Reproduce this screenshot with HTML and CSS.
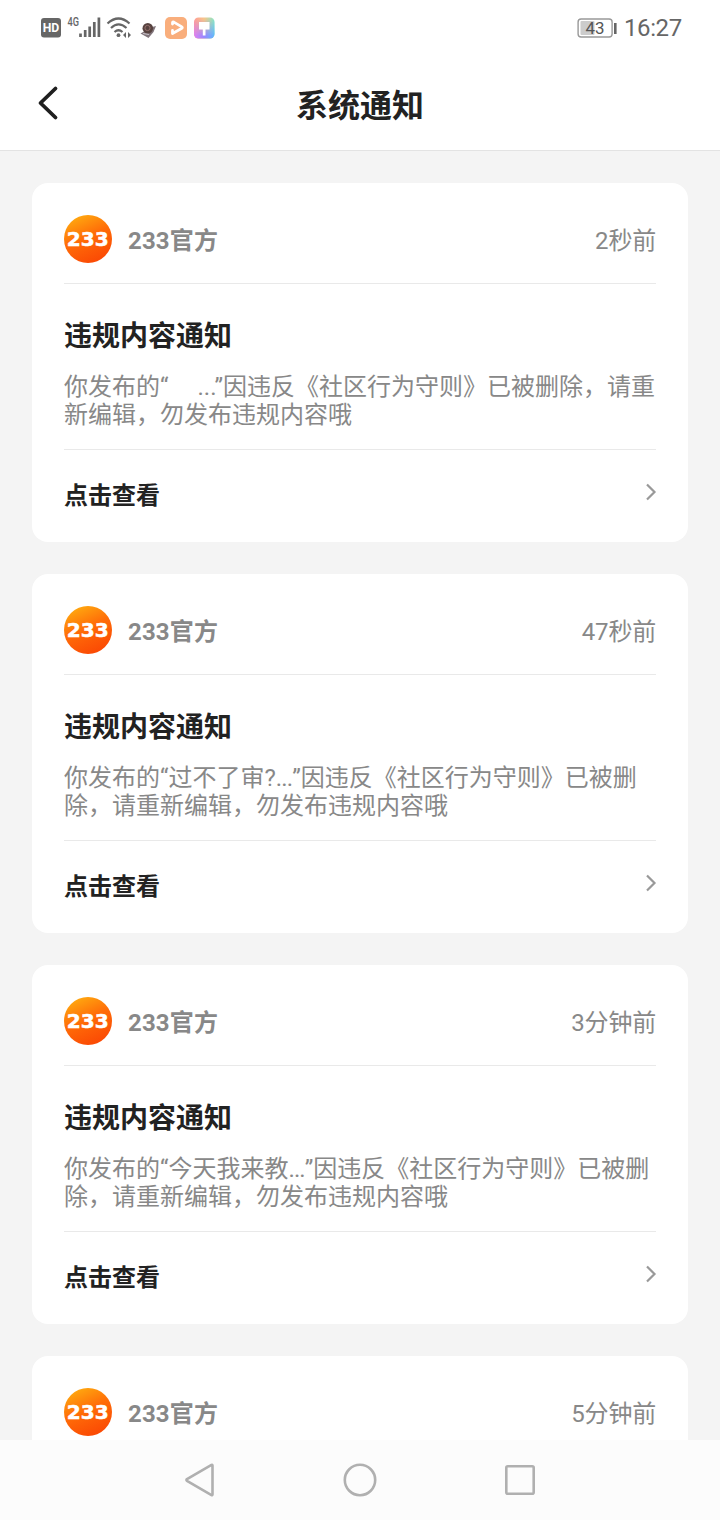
FILE: index.html
```html
<!DOCTYPE html>
<html lang="zh-CN">
<head>
<meta charset="utf-8">
<title>系统通知</title>
<link rel="stylesheet" href="styles.css">
</head>
<body>
<svg class="defs" width="0" height="0" aria-hidden="true">
  <defs>
    <linearGradient id="fire" x1="0.15" y1="0" x2="0.6" y2="1">
      <stop offset="0" stop-color="#ffb010"/><stop offset=".5" stop-color="#ff6c08"/><stop offset="1" stop-color="#fb4a04"/>
    </linearGradient>
    <symbol id="logo" viewBox="0 0 48 48">
      <circle cx="24" cy="24" r="24" fill="url(#fire)"/>
      <text class="logo-text" x="2.800" y="31.300" textLength="42" lengthAdjust="spacingAndGlyphs">233</text>
    </symbol>
    <symbol id="chevron" viewBox="0 0 12 20">
      <path d="M2 2.5 9.5 10 2 17.5" fill="none" stroke="#999" stroke-width="2.200"/>
    </symbol>
  </defs>
</svg>
<div class="screen">
  <div class="status">
    <svg class="status-icons" width="190" height="32" viewBox="34 12 190 32">
      <rect x="41" y="18" width="20" height="19.5" rx="3" fill="#666"/>
      <text class="hd" x="42.700" y="32.400" textLength="16.600" lengthAdjust="spacingAndGlyphs">HD</text>
      <text class="net" x="67.5" y="26" textLength="11.5" lengthAdjust="spacingAndGlyphs">4G</text>
      <path d="M80.5 37v-3.5M85.200 37v-7M89.700 37V26.500M94.300 37V22M98.900 37V17.500" stroke="#666" stroke-width="2.7" fill="none"/>
      <path d="M107.500 23.500Q118.500 13.500 129.500 23.500M111 28Q118.500 20.800 126.500 28M114.500 32Q118.500 28.500 122.500 32" stroke="#666" stroke-width="2.200" fill="none"/>
      <circle cx="118.500" cy="35.200" r="1.900" fill="#666"/>
      <path d="M123 35l3-3v6zM131 35l-3-3v6z" fill="#666"/>
      <path d="M140.500 33.500 152 27l4-1-2.500 6-5 6z" fill="#80747a"/>
      <circle cx="147.800" cy="28.300" r="5.300" fill="#57423f"/>
      <circle cx="147.500" cy="28" r="2.600" fill="none" stroke="#94716d" stroke-width="1"/>
      <path d="M143 33.500l6 1" stroke="#c9c2c9" stroke-width="1.200"/>
      <rect x="165" y="17" width="22" height="22" rx="5" fill="#f9ae7c"/>
      <path d="M172.500 24v-1.300q0-1.200 1.300-.6l7.700 4.500q1.600 1 0 2L172.500 33.500v-3" fill="none" stroke="#fff" stroke-width="2.800" stroke-linejoin="round" stroke-linecap="round"/>
      <defs>
        <linearGradient id="rainbow" x1="0" y1="0" x2="1" y2="0"><stop offset="0" stop-color="#ff9c96"/><stop offset=".5" stop-color="#f6c68b"/><stop offset="1" stop-color="#86e6c9"/></linearGradient>
        <linearGradient id="cool" x1="0" y1="0" x2="1" y2="0"><stop offset="0" stop-color="#df80f2"/><stop offset=".5" stop-color="#9889ff"/><stop offset="1" stop-color="#61b9fb"/></linearGradient>
        <linearGradient id="fade" x1="0" y1="0" x2="0" y2="1"><stop offset=".1" stop-color="#000"/><stop offset=".85" stop-color="#fff"/></linearGradient>
        <mask id="lower"><rect x="194" y="17" width="21" height="22" fill="url(#fade)"/></mask>
      </defs>
      <rect x="194" y="17.500" width="20.500" height="21" rx="4.500" fill="url(#rainbow)"/>
      <rect x="194" y="17.500" width="20.500" height="21" rx="4.500" fill="url(#cool)" mask="url(#lower)"/>
      <path d="M199 22h10.500v7.500h-4V35.500h-2.700V29.500H199z" fill="#fff"/>
    </svg>
    <svg class="battery" width="40" height="22" viewBox="0 0 40 22">
      <rect x="1.100" y="2" width="34" height="18" rx="3" fill="#fff" stroke="#999" stroke-width="1.400"/>
      <rect x="3.500" y="4" width="14" height="14" rx="1" fill="#ccc"/>
      <path d="M38.300 6v11" stroke="#666" stroke-width="2.600"/>
      <text class="level" x="8.500" y="17" textLength="19" lengthAdjust="spacingAndGlyphs">43</text>
    </svg>
    <span class="clock">16:27</span>
  </div>
  <header class="bar">
    <svg class="back" width="24" height="36" viewBox="0 0 24 36"><path d="M19.500 3.500 4.500 18l15 14.500" fill="none" stroke="#1f1f1f" stroke-width="3.800" stroke-linecap="round" stroke-linejoin="round"/></svg>
    <h1>系统通知</h1>
  </header>
  <main class="list">
    <article class="card">
      <div class="head"><svg class="avatar"><use href="#logo"/></svg><span class="name">233官方</span><time>2秒前</time></div>
      <div class="body"><h2>违规内容通知</h2><p>你发布的“<span class="blank"></span>...”因违反《社区行为守则》已被删除，请重<br>新编辑，勿发布违规内容哦</p></div>
      <div class="foot"><span>点击查看</span><svg class="chev"><use href="#chevron"/></svg></div>
    </article>
    <article class="card">
      <div class="head"><svg class="avatar"><use href="#logo"/></svg><span class="name">233官方</span><time>47秒前</time></div>
      <div class="body"><h2>违规内容通知</h2><p>你发布的“过不了审?<span class="dots">...</span>”因违反《社区行为守则》已被删<br>除，请重新编辑，勿发布违规内容哦</p></div>
      <div class="foot"><span>点击查看</span><svg class="chev"><use href="#chevron"/></svg></div>
    </article>
    <article class="card">
      <div class="head"><svg class="avatar"><use href="#logo"/></svg><span class="name">233官方</span><time>3分钟前</time></div>
      <div class="body"><h2>违规内容通知</h2><p>你发布的“今天我来教<span class="dots">...</span>”因违反《社区行为守则》已被删<br>除，请重新编辑，勿发布违规内容哦</p></div>
      <div class="foot"><span>点击查看</span><svg class="chev"><use href="#chevron"/></svg></div>
    </article>
    <article class="card">
      <div class="head"><svg class="avatar"><use href="#logo"/></svg><span class="name">233官方</span><time>5分钟前</time></div>
    </article>
  </main>
  <nav class="keys">
    <svg width="40" height="40" viewBox="0 0 40 40"><path d="M32.500 5.500v29q0 1-1 .5L7 20.800q-1.200-.8 0-1.600L31.500 5q1-.5 1 .5z"/></svg>
    <svg width="40" height="40" viewBox="0 0 40 40"><circle cx="20" cy="20" r="15.200"/></svg>
    <svg width="40" height="40" viewBox="0 0 40 40"><rect x="6.300" y="6.300" width="27.400" height="27.400" rx="1.500"/></svg>
  </nav>
</div>
</body>
</html>
```
FILE: styles.css
```css
* { box-sizing: border-box; }
body { margin: 0; background: #f4f4f4; font-family: Roboto, "Noto Sans CJK SC", sans-serif; }
h1, h2, p { margin: 0; }
.defs { position: absolute; }
.screen { width: 720px; height: 1520px; display: flex; flex-direction: column; overflow: hidden; }
.status { flex: none; height: 56px; background: #fff; display: flex; align-items: center; padding: 0 38px 0 34px; }
.battery { margin-left: auto; margin-right: 7px; }
.clock { font-size: 24px; line-height: 32px; color: #666; width: 58px; white-space: nowrap; letter-spacing: -0.4px; }
.hd { font: 700 12.500px Roboto, sans-serif; fill: #fff; }
.net { font: 500 12px Roboto, sans-serif; fill: #666; }
.level { font: 400 17px Roboto, sans-serif; fill: #555; }
.bar { flex: none; height: 95px; background: #fff; border-bottom: 1px solid #e3e3e3; display: grid; grid-template-columns: 60px 1fr 60px; align-items: center; }
.back { margin-left: 36px; }
.bar h1 { text-align: center; font-size: 32px; line-height: 48px; font-weight: 700; color: #222; padding-top: 5px; }
.list { flex: 1; min-height: 0; overflow: hidden; padding: 32px; display: flex; flex-direction: column; gap: 32px; }
.card { flex: none; height: 359px; background: #fff; border-radius: 16px; padding: 32px 32px 0; display: flex; flex-direction: column; }
.head { flex: none; height: 69px; padding-bottom: 20px; border-bottom: 1px solid #e9e9e9; display: flex; align-items: center; color: #888; font-size: 24px; line-height: 48px; }
.avatar { width: 48px; height: 48px; margin-right: 16px; }
.logo-text { font: 700 20px "DejaVu Sans", sans-serif; fill: #fff; stroke: #fff; stroke-width: .5px; }
.name { font-weight: 700; letter-spacing: 0.15px; }
.head time { margin-left: auto; letter-spacing: -0.2px; }
.name, .head time { padding-top: 3px; }
.body { flex: none; height: 166px; padding-top: 33px; border-bottom: 1px solid #e9e9e9; }
.body h2 { font-size: 28px; line-height: 40px; font-weight: 700; color: #222; }
.body p { margin-top: 16px; font-size: 24px; line-height: 28px; color: #888; white-space: nowrap; }
.blank { display: inline-block; width: 29px; }
.dots { letter-spacing: -0.9px; }
.foot { flex: none; height: 92px; padding-bottom: 6px; display: flex; justify-content: space-between; align-items: center; font-size: 24px; font-weight: 700; color: #222; }
.chev { width: 12px; height: 20px; margin-top: -2px; margin-right: -1px; }
.keys { flex: none; height: 80px; background: #fcfcfc; display: flex; justify-content: center; gap: 120px; align-items: center; }
.keys svg { fill: none; stroke: #b0b0b0; stroke-width: 2.600; }
```
